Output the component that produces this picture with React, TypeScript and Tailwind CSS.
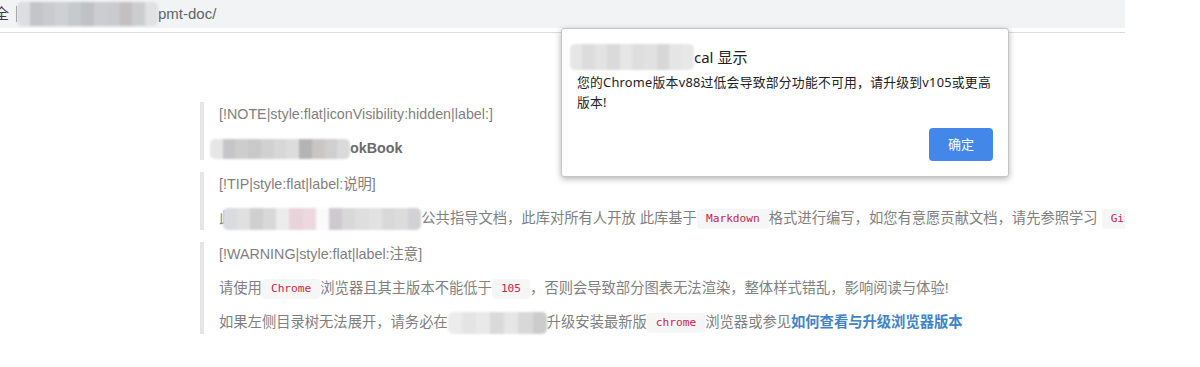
import type { ReactNode } from "react";

// blurred-out parts of the screenshot, drawn as a soft mosaic strip
function Mosaic({
  cells,
  className,
}: {
  cells: string[];
  className: string;
}) {
  return (
    <span
      className={`inline-flex overflow-hidden rounded-[5px] align-middle blur-[0.8px] ${className}`}
    >
      {cells.map((c, i) => (
        <span key={i} className={`h-full flex-1 ${c}`} />
      ))}
    </span>
  );
}

function Code({ children }: { children: ReactNode }) {
  return (
    <code className="inline-block h-[20px] rounded-[4px] bg-[#f6f6f6] px-[9px] align-middle font-['DejaVu_Sans_Mono',monospace] text-[11.2px] leading-[20px] text-[#c7254e]">
      {children}
    </code>
  );
}

function Quote({ children }: { children: ReactNode }) {
  return (
    <div className="flex flex-col gap-[10px] border-l-4 border-[#e6e6e6] pl-[15px]">
      {children}
    </div>
  );
}

const barCells = [
  "bg-[#dcdee0]",
  "bg-[#c3c5c8]",
  "bg-[#c9cbce]",
  "bg-[#ced1d3]",
  "bg-[#c7cacd]",
  "bg-[#bfc2c5]",
  "bg-[#cbcdd0]",
  "bg-[#c9cbcd]",
  "bg-[#c4bfc0]",
  "bg-[#cccdcf]",
  "bg-[#dfe1e2]",
];

const titleCells = [
  "bg-[#e6e6e6]",
  "bg-[#dcdcdc]",
  "bg-[#e3e3e3]",
  "bg-[#dadada]",
  "bg-[#e6e6e6]",
  "bg-[#dedede]",
  "bg-[#e1e1e1]",
  "bg-[#d7d7d7]",
  "bg-[#e5e5e5]",
  "bg-[#e8e8e8]",
];

const noteCells = [
  "bg-[#e6e6e6]",
  "bg-[#c5c5c7]",
  "bg-[#cdcdcd]",
  "bg-[#c9c9c9]",
  "bg-[#d1d1d1]",
  "bg-[#d7d7d7]",
  "bg-[#dcdcdc]",
  "bg-[#b4b4b4]",
  "bg-[#cac6c6]",
  "bg-[#d0cfcf]",
  "bg-[#dadada]",
];

const tipCells = [
  "bg-[#d9dbe0]",
  "bg-[#e0e0e0]",
  "bg-[#cfcfcf]",
  "bg-[#d8d8d8]",
  "bg-[#ececec]",
  "bg-[#e8d3db]",
  "bg-[#ecd8de]",
  "bg-[#fafafa]",
  "bg-[#cdcacd]",
  "bg-[#d8d8d8]",
  "bg-[#dedede]",
  "bg-[#e2e2e2]",
  "bg-[#d9d9d9]",
  "bg-[#dcdcdc]",
  "bg-[#d2d2d4]",
];

const warnCells = [
  "bg-[#ececec]",
  "bg-[#e4e4e4]",
  "bg-[#e9e9e9]",
  "bg-[#dadada]",
  "bg-[#e6e6e6]",
  "bg-[#d8d8d8]",
  "bg-[#cccccc]",
];

export default function App() {
  return (
    <div className="relative h-[367px] w-[1200px] overflow-hidden bg-white font-['Liberation_Sans','Noto_Sans_CJK_SC',sans-serif]">
      <div className="h-full w-[1125px] overflow-hidden">
        {/* address bar */}
        <div className="flex h-[28px] items-center bg-[#f1f3f4] text-[15px]">
          <span className="ml-[-6px] text-[#3c4043]">全</span>
          <span className="ml-[7px] h-[16px] w-px bg-[#8a8f94]" />
          <Mosaic cells={barCells} className="h-[24px] w-[141px]" />
          <span className="text-[#5f6368]">pmt-doc/</span>
        </div>
        <div className="mt-[4px] h-px bg-[#dadce0]" />

        {/* page content */}
        <div className="ml-[200px] flex flex-col gap-[12px] pt-[69px] text-[14.3px] leading-[24px] text-[#7f7f7f]">
          <Quote>
            <p className="whitespace-nowrap">
              [!NOTE|style:flat|iconVisibility:hidden|label:]
            </p>
            <p className="whitespace-nowrap font-bold text-[#6a6a6a]">
              <Mosaic cells={noteCells} className="ml-[-9px] h-[20px] w-[140px]" />
              okBook
            </p>
          </Quote>

          <Quote>
            <p className="whitespace-nowrap">[!TIP|style:flat|label:说明]</p>
            <p className="whitespace-nowrap">
              此
              <Mosaic cells={tipCells} className="ml-[-10px] h-[22px] w-[198px]" />
              公共指导文档，此库对所有人开放 此库基于<Code>Markdown</Code>
              格式进行编写，如您有意愿贡献文档，请先参照学习 <Code>GitBook</Code>
            </p>
          </Quote>

          <Quote>
            <p className="whitespace-nowrap">[!WARNING|style:flat|label:注意]</p>
            <p className="whitespace-nowrap">
              请使用<Code>Chrome</Code>浏览器且其主版本不能低于<Code>105</Code>
              ，否则会导致部分图表无法渲染，整体样式错乱，影响阅读与体验!
            </p>
            <p className="whitespace-nowrap">
              如果左侧目录树无法展开，请务必在
              <Mosaic cells={warnCells} className="h-[22px] w-[99px]" />
              升级安装最新版<Code>chrome</Code>浏览器或参见
              <a className="font-bold text-[#4183c4]">如何查看与升级浏览器版本</a>
            </p>
          </Quote>
        </div>
      </div>

      {/* browser alert dialog */}
      <div className="absolute left-[561px] top-[28px] w-[448px] rounded-[3px] border border-[#c6c6c6] bg-white px-[15px] pb-[15px] pt-[16px] font-['Noto_Sans','Noto_Sans_CJK_SC',sans-serif] text-[#202124] shadow-[0_2px_6px_rgba(0,0,0,0.3)]">
        <div className="flex h-[24px] items-center text-[15px]">
          <Mosaic cells={titleCells} className="ml-[-7px] h-[26px] w-[124px]" />
          <span className="whitespace-nowrap">cal 显示</span>
        </div>
        <p className="mt-[3px] whitespace-nowrap text-[12.8px] leading-[20px] tracking-[0.25px]">
          您的Chrome版本v88过低会导致部分功能不可用，请升级到v105或更高
          <br />
          版本!
        </p>
        <div className="mt-[16px] flex justify-end">
          <button className="h-[33px] w-[64px] rounded-[4px] bg-[#4387e9] text-[13px] text-white">
            确定
          </button>
        </div>
      </div>
    </div>
  );
}
